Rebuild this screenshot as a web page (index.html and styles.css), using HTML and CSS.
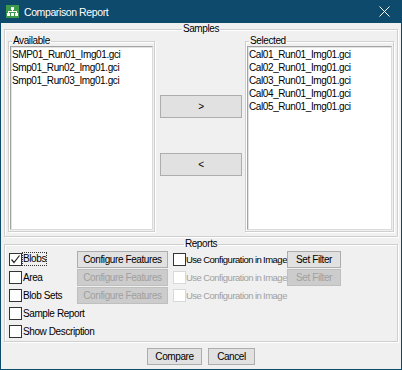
FILE: index.html
```html
<!DOCTYPE html>
<html lang="en">
<head>
    <meta charset="UTF-8">
    <title>Comparison Report</title>
    <link rel="stylesheet" href="styles.css">
</head>
<body>
    <div class="window">
        <div class="titlebar">
            <svg class="app-icon" width="13" height="13" viewBox="0 0 13 13">
                <rect width="13" height="13" fill="#3d9a4c"/>
                <rect x="5" y="2" width="3" height="3" fill="#fff"/>
                <rect x="6" y="5" width="1" height="2" fill="#fff"/>
                <rect x="2" y="6" width="9" height="1" fill="#fff"/>
                <rect x="2" y="7" width="1" height="2" fill="#fff"/>
                <rect x="10" y="7" width="1" height="2" fill="#fff"/>
                <rect x="1" y="8" width="3" height="3" fill="#fff"/>
                <rect x="5" y="8" width="3" height="3" fill="#fff"/>
                <rect x="9" y="8" width="3" height="3" fill="#fff"/>
            </svg>
            <span class="title">Comparison Report</span>
            <svg class="close" width="11" height="11" viewBox="0 0 11 11">
                <path d="M0.5 0.5 L10.5 10.5 M10.5 0.5 L0.5 10.5" stroke="#fff" stroke-width="1"/>
            </svg>
        </div>

        <div class="content">
            <fieldset class="group samples">
                <legend class="centered">Samples</legend>
                <div class="samples-grid">
                    <fieldset class="group list-group">
                        <legend>Available</legend>
                        <ul class="list">
                            <li>SMP01_Run01_Img01.gci</li>
                            <li>Smp01_Run02_Img01.gci</li>
                            <li>Smp01_Run03_Img01.gci</li>
                        </ul>
                    </fieldset>
                    <div class="move-buttons">
                        <button class="btn move">&gt;</button>
                        <button class="btn move">&lt;</button>
                    </div>
                    <fieldset class="group list-group">
                        <legend>Selected</legend>
                        <ul class="list">
                            <li>Cal01_Run01_Img01.gci</li>
                            <li>Cal02_Run01_Img01.gci</li>
                            <li>Cal03_Run01_Img01.gci</li>
                            <li>Cal04_Run01_Img01.gci</li>
                            <li>Cal05_Run01_Img01.gci</li>
                        </ul>
                    </fieldset>
                </div>
            </fieldset>

            <fieldset class="group reports">
                <legend class="centered">Reports</legend>
                <div class="report-grid">
                    <label class="check"><span class="box checked"><svg width="11" height="11" viewBox="0 0 11 11"><path d="M1.5 5.5 L4 8.5 L9.5 1.5" fill="none" stroke="#222" stroke-width="1.2"/></svg></span><span class="focus">Blobs</span></label>
                    <button class="btn">Configure Features</button>
                    <label class="check config"><span class="box"></span>Use Configuration in Image</label>
                    <button class="btn">Set Filter</button>

                    <label class="check"><span class="box"></span>Area</label>
                    <button class="btn" disabled>Configure Features</button>
                    <label class="check config disabled"><span class="box"></span>Use Configuration in Image</label>
                    <button class="btn" disabled>Set Filter</button>

                    <label class="check"><span class="box"></span>Blob Sets</label>
                    <button class="btn" disabled>Configure Features</button>
                    <label class="check config disabled"><span class="box"></span>Use Configuration in Image</label>
                    <span></span>

                    <label class="check wide"><span class="box"></span>Sample Report</label>
                    <label class="check wide"><span class="box"></span>Show Description</label>
                </div>
            </fieldset>

            <div class="footer">
                <button class="btn compare">Compare</button>
                <button class="btn cancel">Cancel</button>
            </div>
        </div>
    </div>
</body>
</html>
```

FILE: styles.css
```css
html, body {
    margin: 0;
    padding: 0;
}
body {
    font-family: 'Liberation Sans', Arial, sans-serif;
    font-size: 10px;
    letter-spacing: -0.4px;
    color: #000;
    background: #f0f0f0;
}
.window {
    width: 402px;
    height: 370px;
    box-sizing: border-box;
    border: 1px solid #0d4a6b;
    border-top: none;
    background: #f0f0f0;
}
.titlebar {
    height: 23px;
    margin: 0 -1px;
    background: #0d4a6b;
    display: flex;
    align-items: center;
    color: #fff;
}
.app-icon {
    margin-left: 6px;
    margin-top: -1px;
}
.title {
    margin-left: 5px;
    font-size: 10.5px;
    letter-spacing: -0.4px;
    line-height: 16px;
}
.close {
    margin-left: auto;
    margin-right: 12px;
}
.content {
    padding: 0 3px 0 3px;
}
.group {
    margin: 0;
    padding: 0;
    min-width: 0;
    border: 1px solid #cfcfcf;
    box-shadow: inset 1px 1px 0 #fff, 1px 1px 0 #fff;
}
.group legend {
    padding: 0 1px;
    margin-left: 2px;
    line-height: 12px;
    font-size: 10px;
}
.group legend.centered {
    margin: 0 auto;
}
.samples {
    height: 214px;
    box-sizing: border-box;
}
.samples-grid {
    display: grid;
    grid-template-columns: 147px 90px 149px;
    padding: 0 3px;
}
.list-group {
    height: 197px;
    box-sizing: border-box;
    padding: 0 1px;
}
.list-group legend {
    margin-left: 2px;
}
.list {
    list-style: none;
    margin: -1px 0 0 0;
    padding: 1px 0 0 0;
    height: 184px;
    box-sizing: border-box;
    background: #fff;
    border: 1px solid #a3a3a3;
    border-right-color: #dadada;
    border-bottom-color: #dadada;
    box-shadow: inset 1px 1px 0 #e3e3e3;
}
.list li {
    line-height: 13px;
    padding-left: 1px;
}
.move-buttons {
    display: flex;
    flex-direction: column;
    padding: 60px 0 0 5px;
    gap: 35px;
}
.btn {
    font-family: inherit;
    font-size: 10px;
    letter-spacing: -0.4px;
    color: #000;
    background: #e1e1e1;
    border: 1px solid #adadad;
    padding: 0;
    margin: 0;
    height: 17px;
    box-sizing: border-box;
    white-space: nowrap;
    overflow: hidden;
}
.btn:disabled {
    background: #cccccc;
    border-color: #bfbfbf;
    color: #a0a0a0;
}
.move {
    width: 82px;
    height: 23px;
}
.reports {
    margin-top: 1px;
    height: 104px;
    box-sizing: border-box;
}
.report-grid {
    display: grid;
    grid-template-columns: 63px 91px 109px 54px;
    grid-auto-rows: 18px;
    column-gap: 5px;
    align-items: center;
    padding-left: 4px;
}
.check {
    display: flex;
    align-items: center;
    white-space: nowrap;
}
.check.wide {
    grid-column: 1 / -1;
}
.check.config {
    font-size: 9.5px;
    letter-spacing: -0.5px;
    word-spacing: -0.4px;
}
.check.config .box {
    margin-right: 0;
}
.box {
    flex-shrink: 0;
    width: 13px;
    height: 13px;
    box-sizing: border-box;
    border: 1px solid #333;
    background: #fff;
    margin-right: 1px;
    display: flex;
    align-items: center;
    justify-content: center;
}
.check.disabled {
    color: #a0a0a0;
}
.check.disabled .box {
    border-color: #d9d9d9;
}
.focus {
    outline: 1px dotted #333;
    line-height: 12px;
}
.footer {
    display: flex;
    justify-content: center;
    gap: 6px;
    padding-top: 6px;
}
.compare {
    width: 55px;
}
.cancel {
    width: 47px;
}
```
